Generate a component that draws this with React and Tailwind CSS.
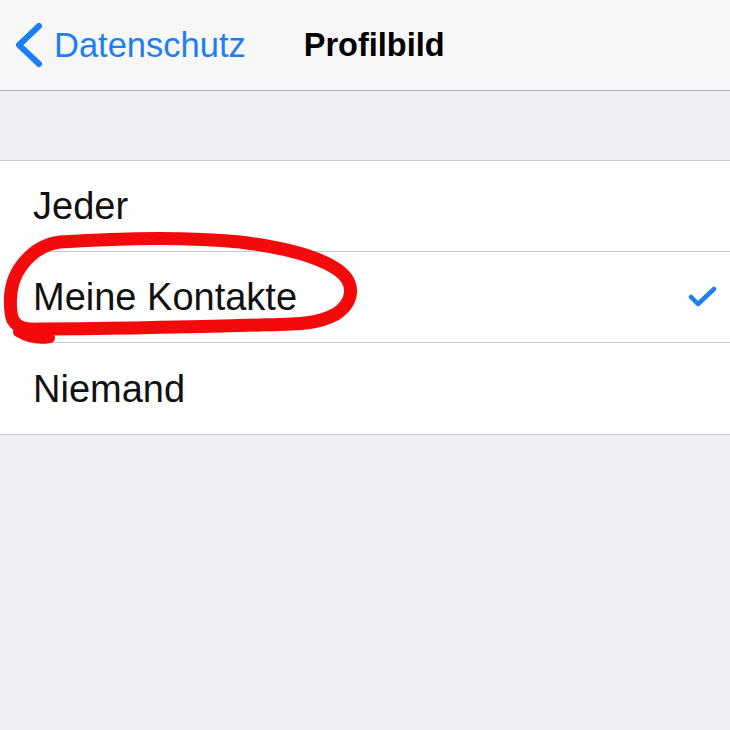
import React from 'react'

// iOS-style settings list: "Profilbild" privacy picker with a hand-drawn red mark

const ROWS = [
  { label: 'Jeder', checked: false },
  { label: 'Meine Kontakte', checked: true },
  { label: 'Niemand', checked: false },
]

function Chevron() {
  return (
    <svg width="30" height="44" viewBox="0 0 30 44" className="shrink-0">
      <path d="M25 3 L5 22 L25 41" fill="none" stroke="#1b7ff3" strokeWidth="6" strokeLinecap="round" strokeLinejoin="round" />
    </svg>
  )
}

function Check() {
  return (
    <svg width="30" height="24" viewBox="0 0 30 24">
      <path d="M3 12 L10 19 L26 4" fill="none" stroke="#1b7ff3" strokeWidth="4.5" strokeLinecap="round" strokeLinejoin="round" />
    </svg>
  )
}

function Row({ label, checked, last }) {
  return (
    <div className="flex h-[91px] items-stretch pl-[33px]">
      <div className={`flex flex-1 items-center justify-between pr-[12px] ${last ? '' : 'border-b border-[#c8c7cc]'}`}>
        <span className="text-[38px] leading-none text-[#111]">{label}</span>
        {checked && <Check />}
      </div>
    </div>
  )
}

export default function App() {
  return (
    <div className="relative h-[730px] w-[730px] overflow-hidden bg-[#efeff4]" style={{ fontFamily: '"Liberation Sans", Arial, sans-serif' }}>
      {/* Nav bar */}
      <div className="flex h-[91px] items-center border-b border-[#b4b4b8] bg-[#f7f7f8] pl-[14px]">
        <Chevron />
        <span className="ml-[10px] text-[34.5px] leading-none text-[#1b7ff3]">Datenschutz</span>
        <span className="ml-[58px] text-[32.5px] font-bold leading-none text-black">Profilbild</span>
      </div>

      {/* Group */}
      <div className="mt-[69px] border-y border-[#c8c7cc] bg-white">
        {ROWS.map((r, i) => (
          <Row key={r.label} {...r} last={i === ROWS.length - 1} />
        ))}
      </div>

      {/* hand-drawn red mark */}
      <svg className="pointer-events-none absolute left-0 top-0" width="730" height="730" viewBox="0 0 730 730">
        <path
          d="M60 242 C120 238 190 237 240 242 C280 247 318 256 338 270 C356 283 354 302 336 314 C318 324 300 324 260 325 C190 327 110 329 40 329 C22 330 12 326 11 312 C9 295 12 278 22 265 C32 252 44 244 60 242"
          fill="none" stroke="#f30a0a" strokeWidth="13" strokeLinecap="round" strokeLinejoin="round"
        />
        <path d="M18 332 C28 338 40 340 50 338" fill="none" stroke="#f30a0a" strokeWidth="10" strokeLinecap="round" />
      </svg>
    </div>
  )
}
